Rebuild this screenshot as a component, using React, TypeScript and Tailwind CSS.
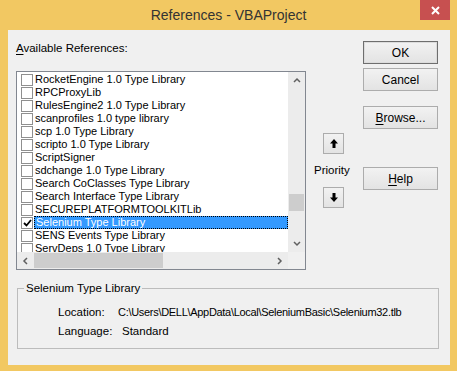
import type { ReactNode } from "react";

const items = [
  "RocketEngine 1.0 Type Library",
  "RPCProxyLib",
  "RulesEngine2 1.0 Type Library",
  "scanprofiles 1.0 type library",
  "scp 1.0 Type Library",
  "scripto 1.0 Type Library",
  "ScriptSigner",
  "sdchange 1.0 Type Library",
  "Search CoClasses Type Library",
  "Search Interface Type Library",
  "SECUREPLATFORMTOOLKITLib",
  "Selenium Type Library",
  "SENS Events Type Library",
  "ServDeps 1.0 Type Library",
];

const SELECTED = "Selenium Type Library";

function Chevron({ dir }: { dir: "up" | "down" | "left" | "right" }) {
  const pts = {
    up: "1,5 4,2 7,5",
    down: "1,2 4,5 7,2",
    left: "5,1 2,4 5,7",
    right: "2,1 5,4 2,7",
  }[dir];
  return (
    <svg width="8" height="8" viewBox="0 0 8 8">
      <polyline points={pts} fill="none" stroke="#606060" strokeWidth="1.5" />
    </svg>
  );
}

function Arrow({ down }: { down?: boolean }) {
  return (
    <svg width="8" height="9" viewBox="0 0 8 9" className={down ? "rotate-180" : ""}>
      <path d="M4 0 L8 4.5 H5.5 V9 H2.5 V4.5 H0 Z" fill="#000" />
    </svg>
  );
}

function DlgButton({ children, def }: { children: ReactNode; def?: boolean }) {
  return (
    <div
      className={
        "flex h-[23px] w-[75px] items-center justify-center border bg-gradient-to-b from-[#f2f2f2] to-[#e3e3e3] text-[12px] text-black " +
        (def ? "border-[#6e6e6e] shadow-[inset_0_0_0_1px_#dcdcdc]" : "border-[#acacac]")
      }
    >
      {children}
    </div>
  );
}

function Row({ label }: { label: string }) {
  const sel = label === SELECTED;
  return (
    <div className="flex h-[13px] items-center">
      <div className="ml-[4px] flex h-[12px] w-[12px] shrink-0 items-center justify-center border border-[#8f8f8f] bg-white">
        {sel && (
          <svg width="9" height="8" viewBox="0 0 9 8">
            <polyline points="1,4 3.5,6.5 8,1" fill="none" stroke="#000" strokeWidth="1.8" />
          </svg>
        )}
      </div>
      <div
        className={
          "ml-[1px] flex h-[13px] items-center whitespace-nowrap pl-[1px] " +
          (sel
            ? "flex-1 border border-dotted border-black bg-[#3399ff] text-white"
            : "text-black")
        }
      >
        {label}
      </div>
    </div>
  );
}

function ReferenceList() {
  return (
    <div className="mt-[15px] grid h-[199px] w-[290px] grid-cols-[1fr_17px] grid-rows-[1fr_17px] border border-[#828790] bg-white text-[11px] leading-[13px]">
      <div className="overflow-hidden pt-[1px]">
        {items.map((it) => (
          <Row key={it} label={it} />
        ))}
      </div>
      <div className="flex flex-col bg-[#ececec]">
        <div className="flex h-[17px] items-center justify-center">
          <Chevron dir="up" />
        </div>
        <div className="flex-1">
          <div className="mx-[1px] mt-[105px] h-[17px] bg-[#cdcdcd]" />
        </div>
        <div className="flex h-[17px] items-center justify-center">
          <Chevron dir="down" />
        </div>
      </div>
      <div className="flex bg-[#ececec]">
        <div className="flex w-[17px] items-center justify-center">
          <Chevron dir="left" />
        </div>
        <div className="flex-1 py-[1px]">
          <div className="h-full w-[129px] bg-[#cdcdcd]" />
        </div>
        <div className="flex w-[17px] items-center justify-center">
          <Chevron dir="right" />
        </div>
      </div>
      <div className="bg-[#f0f0f0]" />
    </div>
  );
}

export default function App() {
  return (
    <div
      className="flex h-[371px] w-[457px] flex-col bg-[#f2c862] text-black"
      style={{ fontFamily: '"Liberation Sans", Arial, sans-serif' }}
    >
      <div className="relative flex h-[30px] shrink-0 items-center justify-center">
        <span className="text-[14px] text-[#333]">References - VBAProject</span>
        <div className="absolute right-[7px] top-0 flex h-[20px] w-[30px] items-center justify-center bg-[#c75050]">
          <svg width="9" height="9" viewBox="0 0 9 9">
            <path d="M1 1 L8 8 M8 1 L1 8" stroke="#fff" strokeWidth="2" />
          </svg>
        </div>
      </div>

      <div className="ml-[8px] h-[335px] w-[442px] bg-[#f0f0f0] pl-[8px]">
        <div className="flex">
          <div className="flex w-[290px] flex-col pt-[10px]">
            <div className="text-[11.5px] leading-[16px]">
              <span className="underline underline-offset-2">A</span>vailable References:
            </div>
            <ReferenceList />
          </div>

          <div className="flex w-[57px] flex-col pt-[103px] text-[11.5px]">
            <div className="ml-[17px] flex h-[21px] w-[21px] items-center justify-center border border-[#acacac] bg-gradient-to-b from-[#f2f2f2] to-[#e3e3e3]">
              <Arrow />
            </div>
            <div className="ml-[8px] mt-[9px] leading-[14px]">Priority</div>
            <div className="ml-[17px] mt-[10px] flex h-[21px] w-[21px] items-center justify-center border border-[#acacac] bg-gradient-to-b from-[#f2f2f2] to-[#e3e3e3]">
              <Arrow down />
            </div>
          </div>

          <div className="flex w-[75px] flex-col pt-[11px]">
            <DlgButton def>OK</DlgButton>
            <div className="mt-[4px]">
              <DlgButton>Cancel</DlgButton>
            </div>
            <div className="mt-[15px]">
              <DlgButton>
                <span className="underline underline-offset-2">B</span>rowse...
              </DlgButton>
            </div>
            <div className="mt-[38px]">
              <DlgButton>
                <span className="underline underline-offset-2">H</span>elp
              </DlgButton>
            </div>
          </div>
        </div>

        <fieldset className="ml-[1px] mt-[11px] w-[422px] border border-[#bcbcbc] pb-[10px] text-[11.5px]">
          <legend className="ml-[6px] px-[2px] leading-[14px]">Selenium Type Library</legend>
          <div className="mt-[10px] flex pl-[40px] leading-[14px]">
            <span className="w-[60px]">Location:</span>
            <span className="text-[11px] tracking-[-0.3px]">
              C:\Users\DELL\AppData\Local\SeleniumBasic\Selenium32.tlb
            </span>
          </div>
          <div className="mt-[5px] flex pl-[40px] leading-[14px]">
            <span className="w-[64px]">Language:</span>
            <span>Standard</span>
          </div>
        </fieldset>
      </div>
    </div>
  );
}
